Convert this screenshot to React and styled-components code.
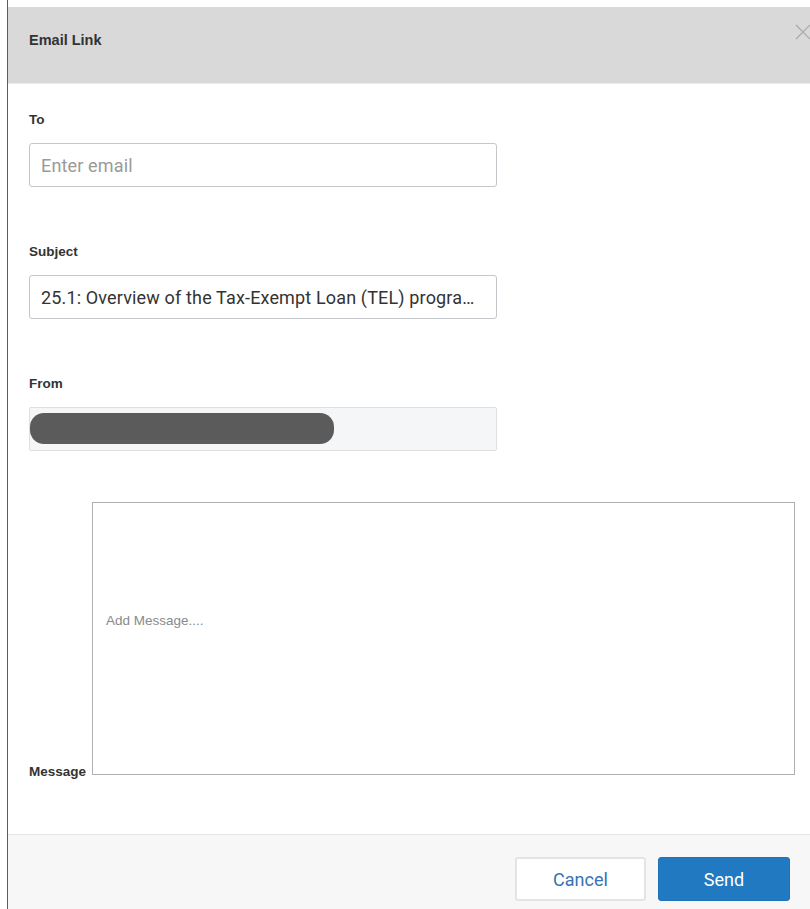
import React from "react";
import styled, { createGlobalStyle } from "styled-components";

const GlobalStyle = createGlobalStyle`
  html, body {
    margin: 0;
    padding: 0;
    background: #ffffff;
    overflow: hidden;
  }
  body {
    font-family: Roboto, "Liberation Sans", Arial, sans-serif;
  }
  * { box-sizing: border-box; }
`;

const Frame = styled.div`
  margin-left: 7px;
  height: 909px;
  border-left: 1px solid #5c5c5c;
  padding-top: 7px;
  overflow: hidden;
`;

const Dialog = styled.div`
  height: 902px;
  display: flex;
  flex-direction: column;
  background: #ffffff;
`;

const Header = styled.div`
  position: relative;
  height: 77px;
  flex: none;
  background: #d9d9d9;
  border-bottom: 1px solid #ececec;
  display: flex;
  align-items: center;
  padding: 0 0 10px 21px;
`;

const Title = styled.h2`
  margin: 0;
  font-family: "Liberation Sans", Arial, sans-serif;
  font-size: 14.5px;
  font-weight: 700;
  color: #333333;
`;

const CloseButton = styled.button`
  position: absolute;
  top: 17px;
  right: -1px;
  width: 16px;
  height: 16px;
  padding: 0;
  border: 0;
  background: transparent;
  color: #a9a9a9;
  cursor: pointer;
  svg { display: block; }
`;

const Body = styled.div`
  flex: 1;
  padding: 29px 10px 0 21px;
  display: flex;
  flex-direction: column;
`;

const Field = styled.div`
  display: flex;
  flex-direction: column;
  margin-bottom: ${(p) => p.$gap || 58}px;
`;

const Label = styled.label`
  font-family: "Liberation Sans", Arial, sans-serif;
  font-size: 13.5px;
  font-weight: 700;
  color: #333333;
  line-height: 14px;
  margin-bottom: 16px;
`;

const TextInput = styled.input`
  width: 468px;
  height: 44px;
  padding: 0 11px;
  border: 1px solid #c3c6ca;
  border-radius: 3px;
  background: #ffffff;
  font-family: Roboto, "Liberation Sans", Arial, sans-serif;
  font-size: 18px;
  letter-spacing: 0.15px;
  color: #333333;
  outline: none;
  text-overflow: ellipsis;
  &::placeholder { color: #9a9a9a; }
`;

const ReadOnlyBox = styled.div`
  width: 468px;
  height: 44px;
  padding: 5px 0 0 0;
  border: 1px solid #dde0e3;
  border-radius: 2px;
  background: #f5f6f7;
`;

const Redacted = styled.div`
  width: 304px;
  height: 31px;
  border-radius: 14px;
  background: #5b5b5b;
`;

const MessageRow = styled.div`
  display: flex;
  align-items: flex-end;
`;

const MessageLabel = styled.label`
  font-family: "Liberation Sans", Arial, sans-serif;
  font-size: 13.5px;
  font-weight: 700;
  color: #333333;
  line-height: 12px;
  margin-bottom: -3px;
  width: 63px;
  flex: none;
`;

const MessageArea = styled.textarea`
  flex: none;
  width: 703px;
  height: 273px;
  resize: none;
  border: 1px solid #b0b0b0;
  padding: 110px 13px 0 13px;
  font-family: "Liberation Sans", Arial, sans-serif;
  font-size: 13.5px;
  color: #333333;
  outline: none;
  &::placeholder { color: #8a8a8a; }
`;

const Footer = styled.div`
  height: 75px;
  flex: none;
  border-top: 1px solid #e6e6e6;
  background: #f7f7f7;
  display: flex;
  justify-content: flex-end;
  align-items: flex-start;
  gap: 12px;
  padding: 22px 20px 0 0;
`;

const Button = styled.button`
  height: 44px;
  width: ${(p) => (p.$primary ? 132 : 131)}px;
  border-radius: 3px;
  font-family: Roboto, "Liberation Sans", Arial, sans-serif;
  font-size: 18px;
  cursor: pointer;
  border: ${(p) => (p.$primary ? "1px solid #1f74b9" : "2px solid #e2e5e8")};
  background: ${(p) => (p.$primary ? "#2179c1" : "#ffffff")};
  color: ${(p) => (p.$primary ? "#ffffff" : "#3473b6")};
`;

const CloseIcon = () => (
  <svg width="16" height="16" viewBox="0 0 16 16" fill="none" stroke="currentColor" strokeWidth="1.2">
    <path d="M1 1 L15 15 M15 1 L1 15" />
  </svg>
);

export default function App() {
  return (
    <>
      <GlobalStyle />
      <Frame>
        <Dialog>
          <Header>
            <Title>Email Link</Title>
            <CloseButton aria-label="Close">
              <CloseIcon />
            </CloseButton>
          </Header>
          <Body>
            <Field>
              <Label>To</Label>
              <TextInput placeholder="Enter email" />
            </Field>
            <Field>
              <Label>Subject</Label>
              <TextInput defaultValue="25.1: Overview of the Tax-Exempt Loan (TEL) program for eligible borrowers" />
            </Field>
            <Field $gap={51}>
              <Label>From</Label>
              <ReadOnlyBox>
                <Redacted />
              </ReadOnlyBox>
            </Field>
            <MessageRow>
              <MessageLabel>Message</MessageLabel>
              <MessageArea placeholder="Add Message...." />
            </MessageRow>
          </Body>
          <Footer>
            <Button>Cancel</Button>
            <Button $primary>Send</Button>
          </Footer>
        </Dialog>
      </Frame>
    </>
  );
}
